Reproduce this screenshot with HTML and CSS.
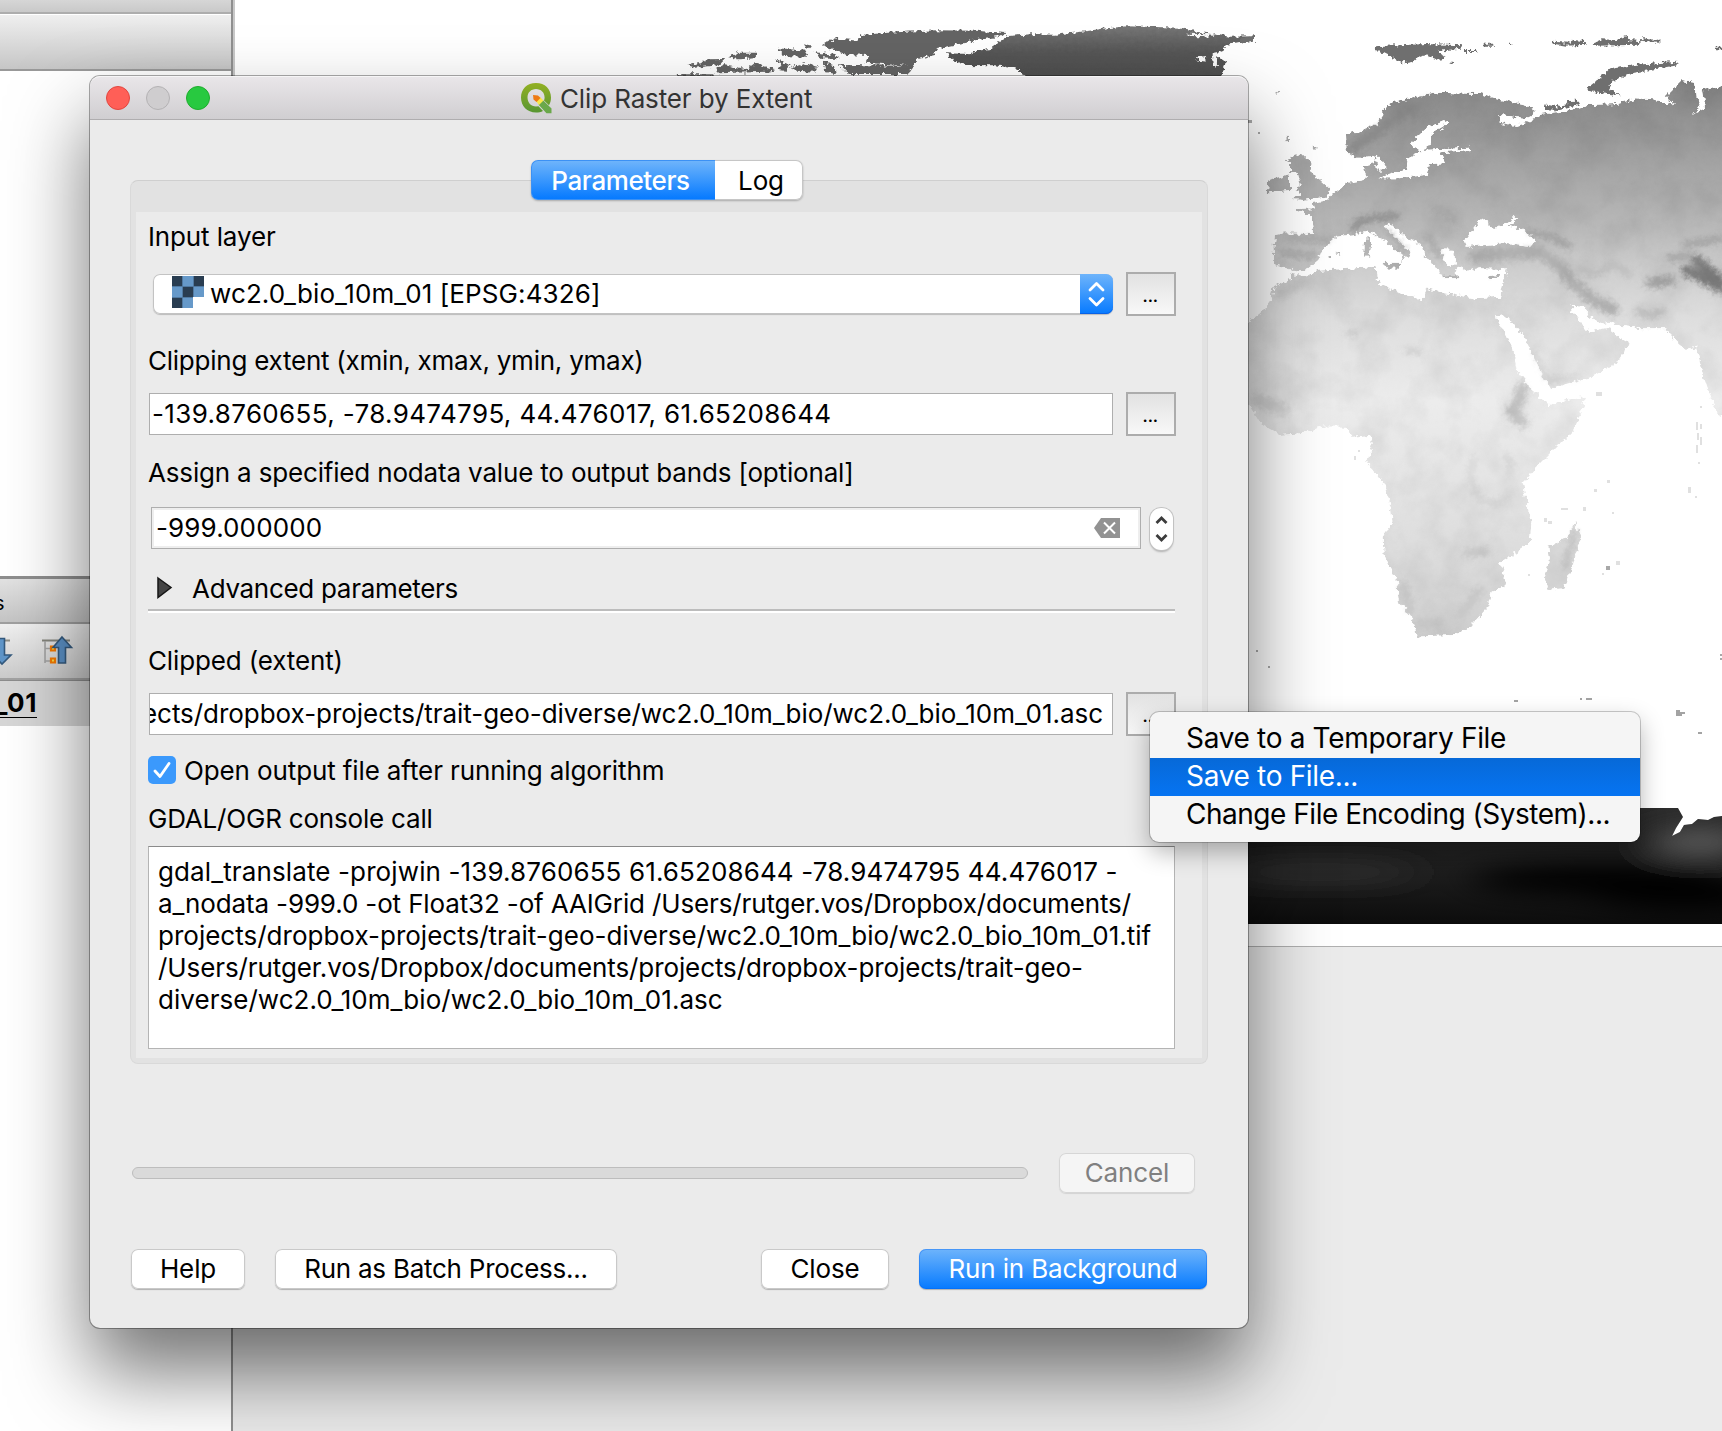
FILE: index.html
```html
<!DOCTYPE html>
<html lang="en">
<head>
<meta charset="utf-8">
<title>Clip Raster by Extent</title>
<link rel="stylesheet" href="styles.css">
</head>
<body>
<div class="desktop">
  <aside class="side">
    <div class="side-strip"></div>
    <div class="side-bar"></div>
    <div class="side-list"></div>
    <div class="side-title">s</div>
    <div class="side-tools">
      <svg width="90" height="54" viewBox="0 0 90 54">
        <path d="M0 13.500H10" stroke="#8f8f87" stroke-width="2"/>
        <path d="M-4 11.500H4.500V28H11L2 37L-7 28H-4Z" fill="#5f95c8" stroke="#34597d" stroke-width="1.600"/>
        <path d="M42 13.500H70" stroke="#85857c" stroke-width="2"/>
        <path d="M45 14V36M45 21.500H50M45 34H50" stroke="#a3a3a3" stroke-width="1.600" fill="none"/>
        <path d="M51 19.500h4v4h-4zM51 31.500h4v4h-4z" fill="#fce94f" stroke="#f57900" stroke-width="2.200"/>
        <path d="M62 10L71.500 20.500H65.500V36H58.500V20.500H53Z" fill="#5a8fc4" stroke="#34597d" stroke-width="1.600"/>
      </svg>
    </div>
    <div class="side-row"><span>_01</span></div>
    <div class="side-rest"></div>
  </aside>
  <main class="canvas">
    <div class="map">
      <svg width="1487" height="946" viewBox="235 0 1487 946">
        <defs>
          <linearGradient id="heat" gradientUnits="userSpaceOnUse" x1="0" y1="150" x2="0" y2="1910">
            <stop offset="0" stop-color="#707070"/><stop offset=".08" stop-color="#8b8b8b"/><stop offset=".2" stop-color="#a4a4a4"/>
            <stop offset=".31" stop-color="#bababa"/><stop offset=".38" stop-color="#cfcfcf"/><stop offset=".46" stop-color="#dedede"/>
            <stop offset=".6" stop-color="#ececec"/><stop offset=".75" stop-color="#e3e3e3"/><stop offset=".86" stop-color="#dcdcdc"/><stop offset="1" stop-color="#cecece"/>
          </linearGradient>
          <linearGradient id="ice" x1="0" y1="0" x2="0" y2="1"><stop offset="0" stop-color="#777"/><stop offset=".2" stop-color="#676767"/><stop offset=".5" stop-color="#555"/><stop offset="1" stop-color="#4e4e4e"/></linearGradient>
          <linearGradient id="pole" x1="0" y1="0" x2="0" y2="1"><stop offset="0" stop-color="#2e2e2e"/><stop offset=".3" stop-color="#222"/><stop offset=".6" stop-color="#1d1d1d"/><stop offset="1" stop-color="#0c0c0c"/></linearGradient>
          <filter id="coast" filterUnits="userSpaceOnUse" x="0" y="0" width="1460" height="2000" color-interpolation-filters="sRGB">
            <feTurbulence type="fractalNoise" baseFrequency=".07" numOctaves="2" seed="4" result="n"/>
            <feDisplacementMap in="SourceGraphic" in2="n" scale="22" xChannelSelector="R" yChannelSelector="G" result="land"/>
            <feTurbulence type="fractalNoise" baseFrequency=".009" numOctaves="5" seed="9"/>
            <feColorMatrix values=".13 0 0 0 .92  .13 0 0 0 .92  .13 0 0 0 .92  0 0 0 0 1" result="relief"/>
            <feBlend in="land" in2="relief" mode="multiply"/>
            <feComposite in2="land" operator="in"/>
          </filter>
          <filter id="jag" filterUnits="userSpaceOnUse" x="-60" y="0" width="1640" height="420" color-interpolation-filters="sRGB">
            <feTurbulence type="fractalNoise" baseFrequency=".09" numOctaves="2" seed="7" result="n"/>
            <feDisplacementMap in="SourceGraphic" in2="n" scale="20" xChannelSelector="R" yChannelSelector="G"/>
          </filter>
          <filter id="soft" x="-50%" y="-50%" width="200%" height="200%"><feGaussianBlur stdDeviation="9"/></filter>
          <filter id="haze" x="-50%" y="-100%" width="200%" height="300%"><feGaussianBlur stdDeviation="20 12"/></filter>
          <clipPath id="polar"><path d="M1240 808H1678L1683 817L1676 828L1672 836L1680 832L1684 825L1692 824L1698 819L1708 820L1714 817L1722 816V924H1240Z"/></clipPath>
        </defs>

        <!-- Arctic Canada and Greenland -->
        <g transform="translate(660 0) scale(.3954 .3333)">
          <g filter="url(#jag)">
            <path fill="url(#ice)" d="M722 160L780 162L800 152L840 146L850 128L880 108L940 103L1000 104L1060 96L1110 88L1180 79L1320 83L1360 95L1440 110L1500 109V122L1440 130L1425 150L1405 165L1430 185L1425 215L1420 240H926L905 207L850 196L770 195L740 180Z"/>
            <path fill="#646464" d="M410 135L440 115L500 122L510 105L560 100L620 95L700 91L800 92L875 99L860 110L800 120L770 128L700 145L695 165L650 178L640 200L625 222H475L455 195L630 197L520 188L530 165L470 162Z"/>
            <path fill="#646464" d="M68 195L100 190L120 178L165 177L150 195L90 203ZM170 172L200 158L245 158L240 175L200 178ZM140 208L160 195L220 208L240 190L295 210L270 215L150 220ZM300 145L370 152L375 170L310 168ZM290 175L325 195L320 213L300 210L305 195ZM330 200L365 190L400 200L390 215L345 212ZM388 155L440 165L455 178L410 175ZM412 182L440 195L445 222L415 215ZM365 133L382 137L380 145L366 140ZM40 223H140V230H40Z"/>
            <path fill="#f8f8f8" d="M1355 172L1385 168L1380 185L1362 182ZM1395 160L1410 156L1408 200L1398 195ZM1330 101L1400 103L1405 110L1345 108Z"/>
          </g>
        </g>

        <g transform="translate(1240 0) scale(.33333)">
          <!-- Arctic islands -->
          <g fill="#6f6f6f" filter="url(#jag)">
            <path d="M403 150L412 138L480 136L560 132L665 136L660 146L590 152L615 172L600 182L560 166L535 170L515 186L495 190L460 175L430 160ZM672 150h40v6h-40zM728 131h34v6h-34zM808 131h8v6h-8zM632 184h7v7h-7z"/>
            <path d="M937 125L985 128L1000 120L1040 124V134L975 137L940 131ZM1058 130L1085 118L1130 120L1160 108L1165 120L1205 124L1195 134L1065 137ZM1207 110L1225 118L1258 120V128L1210 126ZM1428 143h20v8h-20zM0 118L42 108V122L0 128Z"/>
            <path d="M1040 265L1075 238L1108 208L1190 194L1312 185L1305 197L1180 218L1120 242L1105 264L1140 286L1085 280L1040 272ZM985 303L1018 302L1015 315L960 330L912 328L918 314L970 322Z"/>
          </g>
          <g filter="url(#coast)">
            <!-- Europe, western Asia and Africa; inner rings are seas -->
            <path fill="url(#heat)" fill-rule="evenodd" d="M163 627L222 625L218 608L265 600L275 585L318 550L370 540L380 530L368 498L405 488L402 467L345 475L320 455L318 405L355 395L410 375L430 345L428 328L460 305L520 292L600 278L720 282L770 298L850 315L885 332L880 345L860 355L775 345L780 368L830 378L860 368L900 345L990 330L1040 315L1130 312L1190 295L1240 298L1305 315L1275 290L1325 240L1365 245L1370 290L1385 320L1355 345L1395 325L1385 270L1420 262L1480 255V1250L1440 1250L1420 1215L1385 1110L1368 1040L1340 1050L1305 1020L1275 985L1200 985L1125 975L1120 962L1095 972L1060 960L1020 915L995 915L1000 940L1045 995L1090 985L1112 985L1125 1005L1168 1030L1130 1090L1060 1130L1000 1145L930 1168L905 1120L880 1070L850 1010L810 960L790 945L768 950L790 990L820 1050L830 1110L870 1165L915 1205L925 1215L980 1200L1035 1190L1030 1220L1000 1290L900 1390L850 1450L862 1520L875 1560L870 1625L840 1650L780 1690L797 1725L790 1760L755 1775L745 1820L680 1890L640 1905L530 1910L520 1860L480 1810L470 1740L430 1660L428 1610L458 1570L452 1520L430 1450L380 1390L398 1330L390 1305L340 1310L310 1280L250 1280L180 1300L120 1305L60 1270L30 1220L0 1200V970L28 965L65 935L95 895L100 860L150 840L150 820L200 830L230 812L300 808L410 800L415 850L500 885L545 900L560 868L620 880L700 895L780 890L800 808L720 805L680 812L655 800L640 830L605 825L580 790L555 770L545 735L500 715L450 670L432 680L490 735L510 760L480 790L492 765L460 740L400 700L390 695L290 710L250 745L235 780L205 805L165 815L103 795L100 740L105 705L130 700L222 702L218 655Z
              M675 720L725 655L765 688L830 650L830 660L805 680L850 690L888 720L870 742L790 730L680 740Z
              M510 430L560 385L620 360L625 370L575 400L575 435L550 450L690 443L690 450L600 457L615 490L570 492L560 525L470 535L415 535L460 520L500 505L505 475L545 455Z
              M405 475L415 470L440 502L420 515L402 505L415 490Z
              M600 748L640 750L648 790L625 798L608 775Z"/>
            <!-- British Isles -->
            <path fill="#adadad" d="M150 490L135 480L185 460L215 490L205 512L235 535L268 565L262 590L190 600L160 598L185 580L165 570L185 550L175 525L150 515ZM85 540L150 522V570L80 578ZM133 410h14v14h-14zM218 438h12v14h-12zM103 275h16v6h-16z"/>
            <!-- Mediterranean islands -->
            <path fill="#b4b4b4" d="M375 712H390V735L388 770H372ZM430 788H482L475 806H440ZM608 826H655V835H615ZM745 828L780 824V833L748 838ZM262 768h12v8h-12zM284 758h20v6h-20z"/>
            <!-- Madagascar -->
            <path fill="#dcdcdc" d="M1005 1565L1022 1615L1000 1690L970 1765L925 1770L915 1720L930 1680L925 1640L985 1610Z"/>
            <!-- mountain belts -->
            <g fill="none" stroke-linecap="round" filter="url(#soft)">
              <path d="M345 690L350 665L400 655L470 648" stroke="#878787" stroke-width="16"/>
              <path d="M580 620L630 640L645 670" stroke="#a3a3a3" stroke-width="12"/>
              <path d="M445 690L495 750M565 710L600 770" stroke="#a6a6a6" stroke-width="16"/>
              <path d="M150 715L270 720M130 760L230 765" stroke="#a8a8a8" stroke-width="18"/>
              <path d="M860 695L940 712L990 740" stroke="#909090" stroke-width="12"/>
              <path d="M700 770L800 760L900 755L960 800L1000 850L1060 900L1120 930" stroke="#b0b0b0" stroke-width="34"/>
              <path d="M1020 810L1070 822L1120 790L1170 825M1190 930L1230 950L1270 930" stroke="#b8b8b8" stroke-width="14"/>
              <path d="M1230 850L1290 840" stroke="#a2a2a2" stroke-width="30"/>
              <path d="M1285 775L1350 765M1330 735L1446 715" stroke="#929292" stroke-width="12"/>
              <path d="M1370 780L1440 840M1340 810L1446 865" stroke="#7a7a7a" stroke-width="32"/>
              <path d="M340 440L390 410L470 350L560 305" stroke="#8a8a8a" stroke-width="34"/>
              <path d="M845 1160L835 1210M810 1230L850 1270" stroke="#c6c6c6" stroke-width="34"/>
              <path d="M880 1060L920 1140L1020 1135" stroke="#cacaca" stroke-width="10"/>
              <path d="M700 1370L690 1430L710 1490L770 1515L810 1480M800 1360L815 1420" stroke="#cdcdcd" stroke-width="10"/>
              <path d="M680 1660L740 1655M660 1850L720 1770M540 1870L600 1870M490 1750L510 1830" stroke="#c6c6c6" stroke-width="24"/>
              <path d="M320 1000L345 1000M500 1050L540 1055M110 890L200 840" stroke="#c2c2c2" stroke-width="12"/>
              <path d="M1008 1590L975 1700" stroke="#bdbdbd" stroke-width="14"/>
              <path d="M50 1200L130 1230" stroke="#d6d6d6" stroke-width="40"/>
            </g>
          </g>
          <!-- small islands -->
          <path fill="#e0e0e0" shape-rendering="crispEdges" d="M1068 1176h18v12h-18zM1380 1218h6v6h-6zM1369 1265h6v24h-6zM1372 1300h6v20h-6zM1369 1335h6v24h-6zM1380 1272h6v14h-6zM1380 1310h6v24h-6zM1374 1385h6v6h-6zM1100 1441h9v9h-9zM1063 1468h9v9h-9zM963 1524h22v6h-22zM1028 1520h10v12h-10zM913 1555h8v12h-8zM925 1562h10v9h-10zM1116 1536h6v6h-6zM1086 1720h6v6h-6zM1128 1682h12v12h-12zM864 1722h6v6h-6zM342 1367h7v12h-7zM354 1350h6v6h-6zM1345 1462h8v18h-8zM1364 1488h6v6h-6z"/>
          <path fill="#a8a8a8" shape-rendering="crispEdges" d="M48 1950h6v6h-6zM84 1998h6v6h-6zM1098 1698h12v12h-12zM1440 1962h6v6h-6zM1440 1974h6v6h-6zM1020 2094h6v6h-6zM1038 2094h18v6h-18zM54 396h6v6h-6zM24 360h12v10h-12z"/>
        </g>
        <path fill="#a3a3a3" shape-rendering="crispEdges" d="M1514 700h4v2h-4zM1580 698h2v2h-2zM1586 698h6v2h-6zM1676 710h4v2h5v2h-3v2h-6zM1698 732h4v2h-4z"/>

        <!-- Antarctica -->
        <g clip-path="url(#polar)">
          <path fill="url(#pole)" d="M1240 800H1722V924H1240Z"/>
          <g filter="url(#haze)">
            <ellipse cx="1320" cy="872" rx="100" ry="8" fill="#363636"/>
            <ellipse cx="1700" cy="842" rx="50" ry="14" fill="#5c5c5c"/>
            <ellipse cx="1600" cy="880" rx="130" ry="16" fill="#000"/>
            <ellipse cx="1690" cy="895" rx="100" ry="16" fill="#020202"/>
          </g>
        </g>
      </svg>
    </div>
    <div class="status"></div>
  </main>
</div>

<section class="dialog">
  <header class="titlebar">
    <div class="lights"><i class="red"></i><i class="off"></i><i class="green"></i></div>
    <div class="title">
      <svg width="31" height="31" viewBox="0 0 31 31">
        <defs><linearGradient id="q" x1="0" y1="0" x2="0" y2="1"><stop offset="0" stop-color="#93b023"/><stop offset="1" stop-color="#589632"/></linearGradient></defs>
        <path fill="url(#q)" fill-rule="evenodd" d="M15 0C24 0 30 6 30 14.500C30 17.500 29.300 20 28 22.200L23 17.500C23.400 16.600 23.600 15.600 23.600 14.500C23.600 9.500 20 6 15 6C10 6 6.500 9.500 6.500 14.500C6.500 19.500 10 23.500 15 23.500L17.500 23.200L22 28C20 29 17.600 29.500 15 29.500C6 29.500 0 23 0 14.500C0 6 6 0 15 0Z"/>
        <path fill="#6aa84a" d="M18 17.500L22 17.200L30.500 25.500V30.300H25.500L17.800 22Z"/>
        <path fill="#f9e64a" d="M15 18L18.500 13.500L22.500 17.500L18 22Z"/>
        <path fill="#ee7913" d="M12 12L17 12.500L19.500 15L15.500 19L12.500 16.500Z"/>
      </svg>
      <span>Clip Raster by Extent</span>
    </div>
  </header>

  <div class="pane">
    <div class="tabs"><button class="tab on">Parameters</button><button class="tab">Log</button></div>
    <div class="form">
      <label class="lb s1">Input layer</label>
      <div class="row r1">
        <div class="combo">
          <svg width="32" height="32" viewBox="0 0 32 32" shape-rendering="crispEdges">
            <path fill="#6699c9" d="M0 0H32V21H21V32H0Z"/>
            <path fill="#293d51" d="M0 0H10V10H0ZM22 0H32V10H22ZM11 11H21V21H11ZM0 22H10V32H0Z"/>
            <path stroke="#5079a1" d="M10.500 0V32M21.500 0V21M0 10.500H32M0 21.500H21" fill="none"/>
          </svg>
          <span>wc2.0_bio_10m_01 [EPSG:4326]</span>
          <b class="arrows"><svg width="33" height="40" viewBox="0 0 33 40"><path d="M10 16L16.500 9.500L23 16M10 24.500L16.500 31L23 24.500" fill="none" stroke="#fff" stroke-width="2.800" stroke-linecap="round" stroke-linejoin="round"/></svg></b>
        </div>
        <button class="more">...</button>
      </div>
      <label class="lb s2">Clipping extent (xmin, xmax, ymin, ymax)</label>
      <div class="row r2">
        <div class="field digits">-139.8760655, -78.9474795, 44.476017, 61.65208644</div>
        <button class="more">...</button>
      </div>
      <label class="lb s3">Assign a specified nodata value to output bands [optional]</label>
      <div class="row r3">
        <div class="field spin"><span>-999.000000</span>
          <svg width="26" height="20" viewBox="0 0 26 20"><path fill="#929292" d="M7 0H26V20H7L0 10Z"/><path d="M10 4.500L21 15.500M21 4.500L10 15.500" stroke="#fff" stroke-width="2"/></svg>
        </div>
        <div class="stepper"><svg width="23" height="42" viewBox="0 0 23 42"><path d="M6.500 15L11.500 10L16.500 15M6.500 27L11.500 32L16.500 27" fill="none" stroke="#3c3c3c" stroke-width="2.800"/></svg></div>
      </div>
      <div class="adv">
        <svg width="16" height="24" viewBox="0 0 16 24"><path d="M1 2L14 11.500L1 21.500Z" fill="#444" stroke="#161616" stroke-width="1.500"/></svg>
        <span>Advanced parameters</span>
      </div>
      <div class="rule"></div>
      <label class="lb s4">Clipped (extent)</label>
      <div class="row r4">
        <div class="field path"><span>ects/dropbox-projects/trait-geo-diverse/wc2.0_10m_bio/wc2.0_bio_10m_01.asc</span></div>
        <button class="more">...</button>
      </div>
      <div class="check">
        <i><svg width="28" height="28" viewBox="0 0 28 28"><path d="M7 15L12 20.500L21 7.500" fill="none" stroke="#fff" stroke-width="2.800" stroke-linecap="round" stroke-linejoin="round"/></svg></i>
        <span>Open output file after running algorithm</span>
      </div>
      <label class="lb s5">GDAL/OGR console call</label>
      <div class="console">
        <div class="c1">gdal_translate -projwin -139.8760655 61.65208644 -78.9474795 44.476017 -</div>
        <div class="c2">a_nodata -999.0 -ot Float32 -of AAIGrid /Users/rutger.vos/Dropbox/documents/</div>
        <div class="c3">projects/dropbox-projects/trait-geo-diverse/wc2.0_10m_bio/wc2.0_bio_10m_01.tif</div>
        <div class="c4">/Users/rutger.vos/Dropbox/documents/projects/dropbox-projects/trait-geo-</div>
        <div class="c5">diverse/wc2.0_10m_bio/wc2.0_bio_10m_01.asc</div>
      </div>
    </div>
  </div>

  <div class="progress"><div class="bar"></div><button class="btn cancel">Cancel</button></div>
  <footer class="actions">
    <button class="btn help">Help</button>
    <button class="btn batch">Run as Batch Process...</button>
    <button class="btn close">Close</button>
    <button class="btn run">Run in Background</button>
  </footer>
</section>

<nav class="menu">
  <div>Save to a Temporary File</div>
  <div class="sel">Save to File...</div>
  <div class="enc">Change File Encoding (System)...</div>
</nav>
</body>
</html>
```

FILE: styles.css
```css
* { box-sizing: border-box; }
body {
  margin: 0;
  width: 1722px;
  height: 1431px;
  overflow: hidden;
  position: relative;
  background: #ebebeb;
  font: 26px/32px Inter, "Liberation Sans", sans-serif;
  letter-spacing: -.13px;
  color: #000;
}
svg { display: block; flex: none; }
button { font: inherit; letter-spacing: inherit; color: inherit; padding: 0; margin: 0; border: 0; }

/* main window behind the dialog */
.desktop { display: flex; width: 1722px; height: 1431px; }
.side { width: 233px; display: flex; flex-direction: column; background: #fff; border-right: 2px solid #8f8f8f; overflow: hidden; }
.side > div { flex: none; }
.side-strip { height: 14px; background: linear-gradient(#d6d6d6, #c9c9c9); border-bottom: 2px solid #adadad; }
.side-bar { height: 57px; background: linear-gradient(#efefef, #c6c6c6); border-top: 1px solid #fff; border-bottom: 2px solid #999; }
.side-list { height: 505px; border-bottom: 1px solid #fff; }
.side-title { height: 48px; background: linear-gradient(#e2e2e2, #c4c4c4); border-top: 3px solid #8e8e8e; border-bottom: 2px solid #9f9f9f; font-size: 20px; line-height: 48px; text-indent: -6px; }
.side-tools { height: 56px; background: linear-gradient(#f0f0f0, #cbcbcb); border-bottom: 2px solid #a2a2a2; padding-top: 3px; }
.side-row { height: 46px; background: #d6d6d6; border-top: 1px solid #8d8d8d; font-weight: 700; line-height: 44px; }
.side-row span { display: inline-block; margin-left: -5px; height: 37px; line-height: 44px; border-bottom: 1px solid #000; letter-spacing: .8px; }
.side-rest { height: 700px; }
.canvas { flex: 1; display: flex; flex-direction: column; }
.map { height: 947px; background: #fff; border-bottom: 1px solid #b0b0b0; border-left: 2px solid #c8c8c8; overflow: hidden; }
.status { flex: 1; background: #ebebeb; }

/* dialog window */
.dialog {
  position: absolute;
  left: 90px;
  top: 76px;
  width: 1158px;
  height: 1252px;
  display: flex;
  flex-direction: column;
  border-radius: 10px;
  background: #ebebeb;
  box-shadow: 0 0 0 1px rgba(0,0,0,.33), 0 44px 80px rgba(0,0,0,.55);
}
.titlebar {
  flex: none;
  height: 44px;
  display: flex;
  align-items: center;
  border-radius: 10px 10px 0 0;
  background: linear-gradient(#e9e6e9, #d0ced1);
  border-top: 1px solid #f6f5f6;
  border-bottom: 1px solid #afadaf;
}
.lights { display: flex; gap: 16px; padding-left: 16px; width: 431px; }
.lights i { width: 24px; height: 24px; border-radius: 50%; border: 1px solid; }
.red { background: #ff5f57; border-color: #e2463f !important; }
.off { background: #cfcdcf; border-color: #b4b2b4 !important; }
.green { background: #28c940; border-color: #1ead2d !important; }
.title { display: flex; align-items: center; gap: 8px; color: #333; }
.title span { padding-top: 2px; }

/* tab pane */
.pane {
  flex: none;
  margin: 60px 40px 0;
  height: 884px;
  padding: 0 5px 5px;
  border: 1px solid #d9d9d9;
  border-top-color: #cfcfcf;
  border-radius: 8px;
  background: #e2e2e2;
}
.tabs { display: flex; width: 272px; height: 40px; margin: -21px 0 12px 395px; border-radius: 7px; box-shadow: 0 1px 2px rgba(0,0,0,.25); }
.tab { background: #fff; width: 88px; border: 1px solid #c6c6c6; border-left: 0; border-radius: 0 7px 7px 0; padding: 2px 0 0 5px; }
.tab.on { width: 184px; color: #fff; border: 1px solid #3c91f4; border-right: 0; border-radius: 7px 0 0 7px; background: linear-gradient(#6eb4fb, #067aff); padding: 2px 6px 0 0; font-weight: 500; letter-spacing: -.4px; }
.form { height: 846px; background: #ebebeb; padding: 9px 0 0 12px; }
.form > * { flex: none; }
.lb { display: block; height: 32px; white-space: nowrap; }
.s2 { margin-top: 28px; padding-top: 1px; letter-spacing: -.24px; }
.s3 { margin-top: 21px; letter-spacing: -.17px; }
.s4 { margin-top: 32px; }
.s5 { margin-top: 17px; letter-spacing: -.2px; }
.row { display: flex; align-items: center; height: 44px; }
.r1 { margin-top: 19px; padding-left: 5px; }
.r2 { margin-top: 16px; padding-left: 1px; }
.r3 { margin-top: 18px; padding-left: 3px; }
.r4 { margin-top: 15px; padding-left: 1px; }

.combo {
  width: 960px;
  height: 40px;
  display: flex;
  align-items: center;
  border-radius: 7px;
  background: #fff;
  box-shadow: inset 0 0 0 1px #c3c3c3, 0 1px 1px rgba(0,0,0,.2);
  padding-left: 19px;
  letter-spacing: .11px;
}
.combo > svg { margin-top: -4px; }
.combo span { margin-left: 6px; }
.arrows { margin-left: auto; width: 33px; height: 40px; border-radius: 0 7px 7px 0; background: linear-gradient(#6eb4fb, #067aff); box-shadow: inset 0 -1px #0a62e6; }
.more {
  flex: none;
  width: 50px;
  height: 44px;
  margin-left: auto;
  margin-right: 26px;
  border: 2px solid #acacac;
  background: linear-gradient(#e2e2e2, #f8f8f8);
  font-size: 20px;
  line-height: 38px;
  letter-spacing: -.6px;
  padding: 1px 2px 0 0;
}
.field { width: 964px; height: 42px; background: #fff; border: 1px solid #aeaeae; line-height: 40px; padding-left: 2px; white-space: nowrap; overflow: hidden; }
.digits { letter-spacing: .36px; }
.spin { width: 990px; display: flex; align-items: center; justify-content: space-between; box-shadow: inset 0 0 0 2px #eee; padding: 0 20px 0 4px; letter-spacing: .12px; margin-top: -2px; }
.spin span { margin-top: -1px; }
.spin svg { margin-top: -1px; }
.stepper { width: 23px; height: 42px; margin-left: 9px; margin-top: -1px; border-radius: 11px; background: #fff; box-shadow: 0 0 0 1px #c2c2c2, 0 2px 2px rgba(0,0,0,.25); }
.adv { display: flex; align-items: center; height: 32px; margin-top: 21px; padding-left: 9px; letter-spacing: -.3px; }
.adv span { margin-left: 19px; padding-top: 2px; }
.rule { height: 4px; width: 1027px; margin-top: 5px; border-top: 2px solid #bcbcbc; border-bottom: 2px solid #fff; }
.path { display: flex; justify-content: flex-end; padding: 0 9px 0 0; letter-spacing: -.04px; }
.check { display: flex; height: 32px; margin-top: 18px; gap: 8px; letter-spacing: -.12px; }
.check i { width: 28px; height: 28px; margin-top: 2px; border-radius: 5px; background: #3b99fc; }
.check span { padding-top: 1px; }
.console { width: 1027px; height: 203px; margin-top: 11px; background: #fff; border: 1px solid #b4b4b4; border-top-color: #8b8b8b; padding: 9px 0 0 9px; white-space: nowrap; }
.c1 { letter-spacing: .12px; }
.c2 { letter-spacing: -.14px; }
.c3 { letter-spacing: .01px; }
.c4 { letter-spacing: -.1px; }
.c5 { letter-spacing: .04px; }

/* footer */
.progress { display: flex; align-items: center; margin: 89px 0 0 42px; height: 40px; flex: none; }
.bar { width: 896px; height: 12px; border-radius: 6px; background: #dadada; border: 1px solid #bdbdbd; }
.btn { height: 40px; border-radius: 7px; background: #fff; box-shadow: inset 0 0 0 1px #c9c9c9, 0 1px 1px rgba(0,0,0,.25); padding-bottom: 1px; }
.cancel { width: 136px; margin-left: 31px; background: #f5f5f5; color: #808080; box-shadow: inset 0 0 0 1px #d6d6d6, 0 1px 1px rgba(0,0,0,.1); }
.actions { display: flex; flex: none; margin: 56px 0 0 41px; }
.help { width: 114px; }
.batch { width: 342px; margin-left: 30px; letter-spacing: -.25px; }
.close { width: 128px; margin-left: 144px; }
.run { width: 288px; margin-left: 30px; color: #fff; background: linear-gradient(#6eb4fb, #067aff); box-shadow: inset 0 0 0 1px rgba(0,98,240,.35), 0 1px 1px rgba(0,0,0,.25); letter-spacing: -.13px; }

/* popup menu */
.menu {
  position: absolute;
  left: 1150px;
  top: 712px;
  width: 490px;
  height: 130px;
  padding: 8px 0;
  border-radius: 9px;
  background: #f5f5f5;
  box-shadow: 0 0 0 1px rgba(0,0,0,.2), 0 10px 24px rgba(0,0,0,.3);
  font-size: 28px;
  line-height: 36px;
  letter-spacing: -.32px;
}
.menu div { height: 38px; padding-left: 36px; }
.menu .sel { color: #fff; background: linear-gradient(#0769d8, #0674f2); }
.menu .enc { letter-spacing: -.48px; }
```
